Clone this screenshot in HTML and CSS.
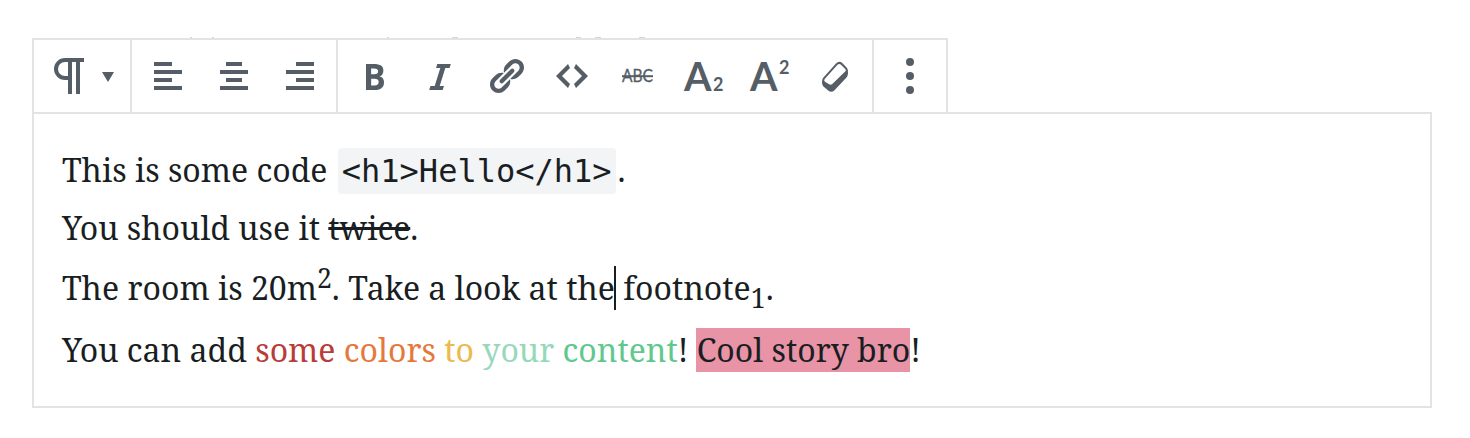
FILE: index.html
```html
<!DOCTYPE html>
<html lang="en"><head><meta charset="utf-8"><title>Editor</title><link rel="stylesheet" href="styles.css"></head>
<body>
<main class="editor">
<svg class="clipped-line" viewBox="0 0 916 1"><path d="M158 0h2v1h-2zM180 0h2v1h-2zM355 0h2v1h-2zM420 0h6v1h-6zM544 0h5v1h-5zM563 0h6v1h-6zM607 0h6v1h-6z"/></svg>
<div class="toolbar">
<div class="group group-block">
<svg class="icon" viewBox="0 0 40 40"><path d="M36 4H17a9 9 0 0 0 0 18h5M22 4v34M30 4v34" fill="none" stroke="currentColor" stroke-width="4"/></svg>
<svg class="caret-down" viewBox="0 0 12 10"><path d="M0 0h12L6 10z"/></svg>
</div>
<div class="group">
<svg class="icon" viewBox="0 0 40 40"><path d="M6 6h18v4H6zM6 14h28v4H6zM6 22h18v4H6zM6 30h28v4H6z"/></svg>
<svg class="icon" viewBox="0 0 40 40"><path d="M12 6h16v4H12zM6 14h28v4H6zM12 22h16v4H12zM6 30h28v4H6z"/></svg>
<svg class="icon" viewBox="0 0 40 40"><path d="M16 6h18v4H16zM6 14h28v4H6zM16 22h18v4H16zM6 30h28v4H6z"/></svg>
</div>
<div class="group">
<svg class="icon" viewBox="0 0 20 20"><path d="M6 4v13h4.54c1.37 0 2.46-.33 3.26-1 .8-.66 1.2-1.58 1.2-2.77 0-.84-.17-1.51-.51-2.01s-.9-.85-1.67-1.03v-.09c.57-.1 1.02-.4 1.36-.9s.51-1.13.51-1.91c0-1.14-.39-1.98-1.17-2.5C12.75 4.26 11.5 4 9.78 4H6zm2.57 5.15V6.26h1.36c.73 0 1.27.11 1.61.32.34.22.51.58.51 1.07 0 .54-.16.92-.47 1.15s-.82.35-1.51.35h-1.5zm0 2.19h1.6c1.44 0 2.16.53 2.16 1.61 0 .6-.17 1.05-.51 1.34s-.86.43-1.57.43H8.57v-3.38z"/></svg>
<svg class="icon" viewBox="0 0 20 20"><path d="M14.78 6h-2.13l-2.8 9h2.12l-.62 2H4.6l.62-2h2.14l2.8-9H8.03l.62-2h6.75z"/></svg>
<svg class="icon" viewBox="0 0 20 20"><path d="M17.74 2.76c1.68 1.69 1.68 4.41 0 6.1l-1.53 1.52c-1.12 1.12-2.7 1.47-4.14 1.09l2.62-2.61.76-.77.76-.76c.84-.84.84-2.2 0-3.04-.84-.85-2.2-.85-3.04 0l-.77.76-3.38 3.38c-.37-1.44-.02-3.02 1.1-4.14l1.52-1.53c1.69-1.68 4.42-1.68 6.1 0zM8.59 13.43l5.34-5.34c.42-.42.42-1.1 0-1.52-.44-.43-1.13-.39-1.53 0l-5.33 5.34c-.42.42-.42 1.1 0 1.52.44.43 1.13.39 1.52 0zm-.76 2.29l4.14-4.15c.38 1.44.03 3.02-1.09 4.14l-1.52 1.53c-1.69 1.68-4.41 1.68-6.1 0-1.68-1.68-1.68-4.42 0-6.1l1.53-1.52c1.12-1.12 2.7-1.47 4.14-1.1l-4.14 4.15c-.85.84-.85 2.2 0 3.05.84.84 2.2.84 3.04 0z"/></svg>
<svg class="icon" viewBox="0 0 20 20"><path d="M9 6L5 10l4 4-1 2-6-6 6-6zM11 14l4-4-4-4 1-2 6 6-6 6z"/></svg>
<svg class="icon" viewBox="0 0 40 40"><text class="abc" x="4" y="26" textLength="31" lengthAdjust="spacingAndGlyphs">ABC</text><path d="M4 19.2h31v2H4z"/></svg>
<svg class="icon" viewBox="0 0 40 40"><text class="letter" x="0" y="35" textLength="27.500" lengthAdjust="spacingAndGlyphs">A</text><text class="digit" x="29" y="35">2</text></svg>
<svg class="icon" viewBox="0 0 40 40"><text class="letter" x="0" y="35" textLength="27.500" lengthAdjust="spacingAndGlyphs">A</text><text class="digit" x="29" y="18">2</text></svg>
<svg class="icon" viewBox="0 0 40 40"><path fill-rule="evenodd" d="M7 22L20 7.500Q23 4.300 26.300 7L31 12Q32.400 13.500 32 17.500Q31.800 20 30.500 21.500L18.500 34.200Q15.500 37.200 12.500 34.700L7.500 30.500Q6 29 6 26.500Q6 23.200 7 22zM8.700 23Q7.500 24.500 9 25.700L13 28.300Q14.800 29.300 16.300 27.900L29.200 15.600Q30.600 14.500 29.400 13.200L25 8.800Q23.200 7.200 21.500 8.800z"/></svg>
</div>
<div class="group">
<svg class="icon" viewBox="0 0 40 40"><circle cx="20" cy="6" r="4"/><circle cx="20" cy="20" r="4"/><circle cx="20" cy="34" r="4"/></svg>
</div>
</div>
<div class="content">
<p class="line">This is some code <code>&lt;h1&gt;Hello&lt;/h1&gt;</code>.</p>
<p class="line">You should use it <s>twice</s>.</p>
<p class="line line-scripts">The room is 20m<sup>2</sup>. Take a look at the<span class="cursor"></span> footnote<sub>1</sub>.</p>
<p class="line line-colors">You can add <span class="red">some</span> <span class="orange">colors</span> <span class="yellow">to</span> <span class="mint">your</span> <span class="green">content</span>! <span class="highlight">Cool story bro</span>!</p>
</div>
</main>
</body></html>
```
FILE: styles.css
```css
*{box-sizing:border-box}
body{margin:0;background:#fff}
.editor{width:1400px;padding-top:37px;margin-left:32px;color:#191e23}
.clipped-line{display:block;width:916px;height:1px;fill:#d4d6d8}
.toolbar{display:flex;width:916px;height:74px;border:2px solid #e2e4e4;border-bottom:0;color:#555d66;fill:currentColor}
.group{display:flex;gap:26px;align-items:center;padding:0 16px;border-right:2px solid #e2e4e4}
.group:last-child{border-right:0}
.group-block{gap:14px;padding:0 16px 0 14px}
.icon{width:40px;height:40px;flex:none;overflow:visible}
.caret-down{width:12px;height:10px;margin-top:2px}
.abc{font:16.5px Lato,sans-serif;stroke:currentColor;stroke-width:.3px}
.letter{font:bold 41px Lato,sans-serif}
.digit{font:bold 18px Lato,sans-serif}
.content{height:296px;border:2px solid #e2e4e4;font:32px "Noto Serif",serif;padding:27px 28px}
.line{margin:0;height:58px;line-height:58px;white-space:nowrap}
.line-scripts{margin-top:2px}
.line-colors{margin-top:4px}
code{display:inline-block;height:46px;margin:0 2px;padding:0 4px;border-radius:4px;background:#f3f4f5;font:32px/46px "DejaVu Sans Mono",monospace}
sup,sub{line-height:0}
sup{vertical-align:12px}
sub{vertical-align:-7.500px}
.cursor{position:relative}
.cursor::after{content:"";position:absolute;left:-1px;bottom:-1px;width:2px;height:44px;background:#191e23}
.red{color:#b83c3a}
.orange{color:#e5793d}
.yellow{color:#ecb94b}
.mint{color:#98d8ba}
.green{color:#5fc88c}
.highlight{margin-left:-1px;padding:0 0 1px 1px;background:#e893a6}
```
